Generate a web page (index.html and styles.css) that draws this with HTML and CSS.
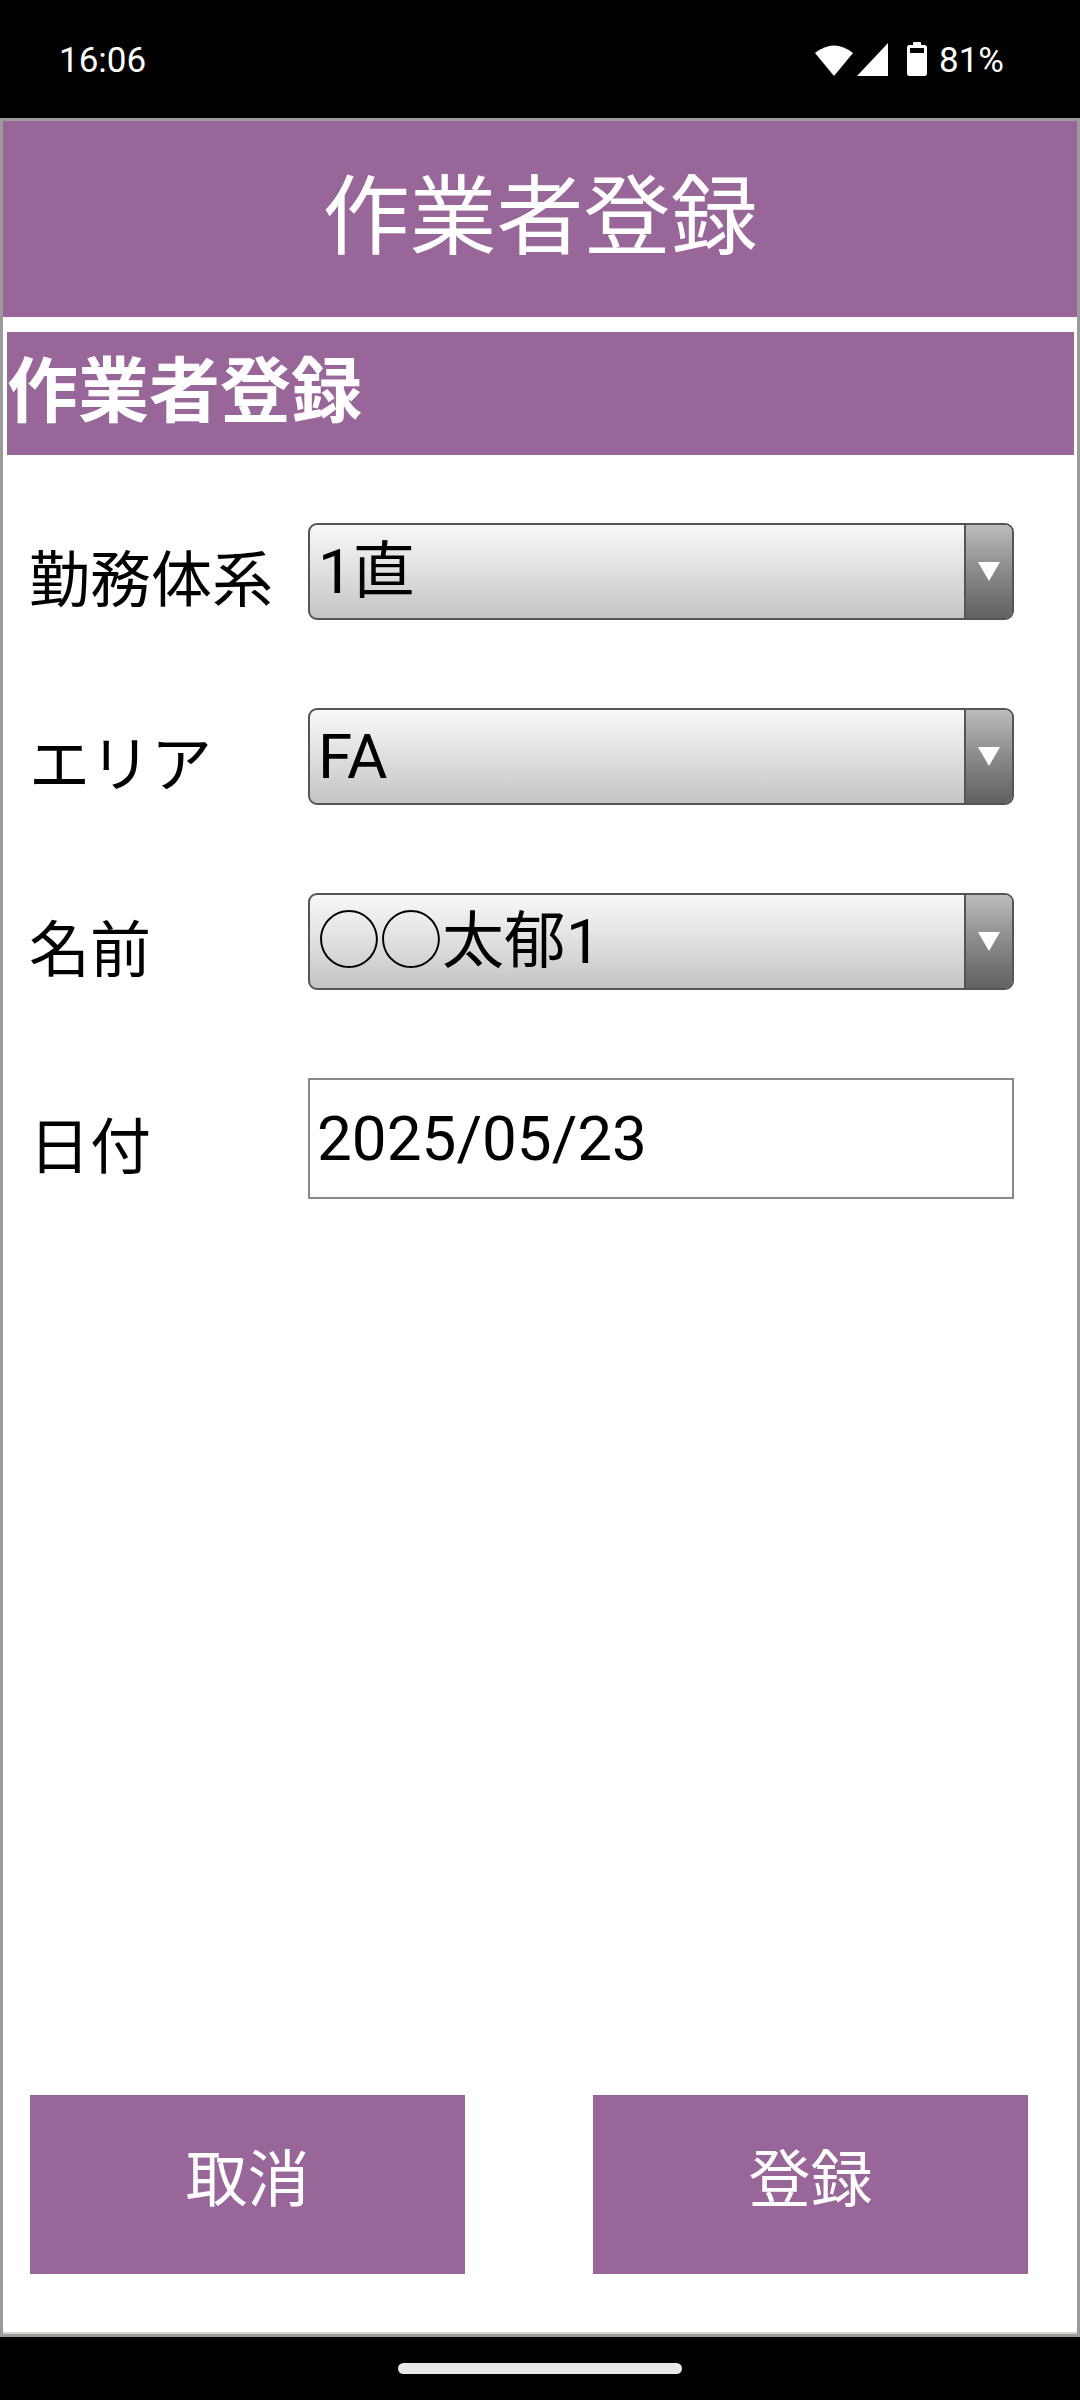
FILE: index.html
```html
<!DOCTYPE html>
<html lang="ja">
<head>
    <meta charset="UTF-8">
    <meta name="viewport" content="width=device-width, initial-scale=1.0">
    <title>作業者登録</title>
    <link rel="stylesheet" href="styles.css">
</head>
<body>
    <div class="status-bar">
        <div class="clock">16:06</div>
        <div class="status-icons">
            <svg class="wifi" width="40" height="33" viewBox="0 0 40 33">
                <path d="M20 33 L1 10 Q20 -5 39 10 Z" fill="#fff"/>
            </svg>
            <svg class="signal" width="31" height="33" viewBox="0 0 31 33">
                <path d="M31 0 L31 33 L0 33 Z" fill="#fff"/>
            </svg>
            <svg class="battery" width="20" height="34" viewBox="0 0 20 34">
                <rect x="6" y="0" width="8" height="4" rx="1" fill="#fff"/>
                <rect x="0" y="3" width="20" height="31" rx="2.5" fill="#fff"/>
                <rect x="3" y="6" width="14" height="5" fill="#000"/>
            </svg>
            <span class="battery-text">81%</span>
        </div>
    </div>

    <div class="frame">
        <div class="header">作業者登録</div>
        <div class="sub-header">作業者登録</div>

        <div class="form">
            <div class="row">
                <div class="label">勤務体系</div>
                <div class="select">
                    <span class="select-value">1直</span>
                    <div class="select-arrow"><span class="tri"></span></div>
                </div>
            </div>
            <div class="row">
                <div class="label">エリア</div>
                <div class="select">
                    <span class="select-value">FA</span>
                    <div class="select-arrow"><span class="tri"></span></div>
                </div>
            </div>
            <div class="row">
                <div class="label">名前</div>
                <div class="select">
                    <span class="select-value">◯◯太郁1</span>
                    <div class="select-arrow"><span class="tri"></span></div>
                </div>
            </div>
            <div class="row">
                <div class="label">日付</div>
                <div class="date-input">2025/05/23</div>
            </div>
        </div>

        <div class="actions">
            <a href="#" class="btn">取消</a>
            <a href="#" class="btn">登録</a>
        </div>
    </div>

    <div class="nav-bar">
        <div class="home-pill"></div>
    </div>
</body>
</html>
```

FILE: styles.css
```css
/* Global */
body {
    margin: 0;
    background: #000;
    font-family: Roboto, "Noto Sans CJK JP", sans-serif;
    color: #000;
}

a {
    text-decoration: none;
    color: inherit;
}

/* Status bar */
.status-bar {
    height: 118px;
    display: flex;
    justify-content: space-between;
    align-items: center;
    padding: 0 76px 0 59px;
    color: #fff;
}

.clock {
    font-size: 35px;
    line-height: 1;
    padding-top: 2px;
}

.status-icons {
    display: flex;
    align-items: center;
}

.signal {
    margin-left: 3px;
}

.battery {
    margin-left: 19px;
}

.battery-text {
    margin-left: 12px;
    font-size: 35px;
    line-height: 1;
    padding-top: 2px;
}

/* Frame */
.frame {
    height: 2219px;
    box-sizing: border-box;
    border: 3px solid #9b9b9b;
    background: #fff;
    box-shadow: inset 0 -2px 0 #d6d2ca;
    display: flex;
    flex-direction: column;
}

.header {
    height: 196px;
    flex-shrink: 0;
    background: #996699;
    color: #fff;
    font-size: 87px;
    line-height: 1;
    display: flex;
    align-items: center;
    justify-content: center;
    padding-bottom: 2px;
    box-sizing: border-box;
}

.sub-header {
    height: 123px;
    flex-shrink: 0;
    margin: 15px 3px 0 4px;
    background: #996699;
    color: #fff;
    font-size: 71px;
    font-weight: bold;
    line-height: 1;
    display: flex;
    align-items: center;
    padding-bottom: 4px;
    box-sizing: border-box;
}

/* Form */
.form {
    display: flex;
    flex-direction: column;
    gap: 88px;
    padding: 68px 0 0 26px;
}

.row {
    display: flex;
    align-items: center;
}

.label {
    width: 279px;
    font-size: 61px;
    line-height: 1;
    padding-top: 20px;
}

.select {
    width: 706px;
    height: 97px;
    box-sizing: border-box;
    border: 2px solid #555;
    border-radius: 9px;
    background: linear-gradient(#f8f8f8, #e2e2e2 45%, #c4c4c4);
    display: flex;
    overflow: hidden;
}

.select-value {
    flex: 1;
    display: flex;
    align-items: center;
    padding-left: 8px;
    font-size: 62px;
    line-height: 1;
}

.select-arrow {
    width: 46px;
    border-left: 2px solid #555;
    background: linear-gradient(#bcbcbc, #8a8a8a 50%, #616161);
    display: flex;
    align-items: center;
    justify-content: center;
}

.tri {
    width: 0;
    height: 0;
    border-left: 11px solid transparent;
    border-right: 11px solid transparent;
    border-top: 19px solid #fff;
}

.date-input {
    width: 706px;
    height: 121px;
    box-sizing: border-box;
    border: 2px solid #888;
    display: flex;
    align-items: center;
    padding-left: 7px;
    font-size: 62px;
    line-height: 1;
}

/* Buttons */
.actions {
    margin-top: auto;
    display: flex;
    gap: 128px;
    padding: 0 0 60px 27px;
}

.btn {
    width: 435px;
    height: 179px;
    box-sizing: border-box;
    padding-bottom: 8px;
    background: #996699;
    color: #fff;
    font-size: 62px;
    line-height: 1;
    display: flex;
    align-items: center;
    justify-content: center;
}

/* Nav bar */
.nav-bar {
    height: 63px;
    display: flex;
    align-items: center;
    justify-content: center;
}

.home-pill {
    width: 284px;
    height: 11px;
    border-radius: 6px;
    background: #e8e8e8;
}
```
